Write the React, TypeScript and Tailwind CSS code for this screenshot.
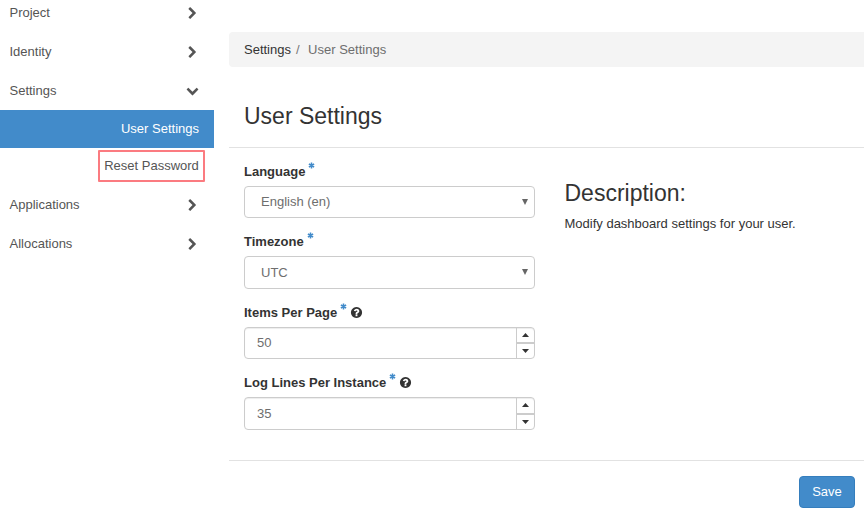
import type { ReactNode } from "react";

const CHEVRON_RIGHT =
  "M1363 877l-742 742q-19 19-45 19t-45-19l-166-166q-19-19-19-45t19-45l531-531-531-531q-19-19-19-45t19-45l166-166q19-19 45-19t45 19l742 742q19 19 19 45t-19 45z";
const CHEVRON_DOWN =
  "M1683 808l-742 741q-19 19-45 19t-45-19l-742-741q-19-19-19-45.5t19-45.5l166-165q19-19 45-19t45 19l531 531 531-531q19-19 45-19t45 19l166 165q19 19 19 45.5t-19 45.5z";
const QUESTION =
  "M1024 1376v-192q0-14-9-23t-23-9h-192q-14 0-23 9t-9 23v192q0 14 9 23t23 9h192q14 0 23-9t9-23zm256-672q0-88-55.5-163t-138.5-116-170-41q-243 0-371 213-15 24 8 42l132 100q7 6 19 6 16 0 25-12 53-68 86-92 34-24 86-24 48 0 85.5 26t37.5 59q0 38-20 61t-68 45q-63 28-115.5 86.5t-52.5 125.5v36q0 14 9 23t23 9h192q14 0 23-9t9-23q0-19 21.5-49.5t54.5-49.5q32-18 49-28.5t46-35 44.5-48 28-60.5 12.5-81zm384 192q0 209-103 385.5t-279.5 279.5-385.5 103-385.5-103-279.5-279.5-103-385.5 103-385.5 279.5-279.5 385.5-103 385.5 103 279.5 279.5 103 385.5z";

function Icon({ d, className }: { d: string; className: string }) {
  return (
    <svg viewBox="0 0 1792 1792" fill="currentColor" className={className}>
      <path d={d} />
    </svg>
  );
}

function NavItem({ label, open = false }: { label: string; open?: boolean }) {
  return (
    <div className="flex h-[39px] items-center justify-between pr-[15px] pl-[9.5px]">
      <span>{label}</span>
      {open ? <Icon d={CHEVRON_DOWN} className="size-[13px]" /> : <Icon d={CHEVRON_RIGHT} className="mt-[2px] size-[13px]" />}
    </div>
  );
}

function Field({ label, help = false, className, children }: { label: string; help?: boolean; className: string; children: ReactNode }) {
  return (
    <div className={className}>
      <div className="flex h-[19px] items-center font-bold">
        <span>{label}</span>
        <svg viewBox="0 0 7 7" className="mb-[12px] ml-[3px] size-[7px]" fill="none" stroke="#428bca" strokeWidth="1.5">
          <path d="M3.5 .5v6M.9 2l5.2 3M6.1 2L.9 5" />
        </svg>
        {help && <Icon d={QUESTION} className="ml-[3px] size-[13px]" />}
      </div>
      <div className="mt-[5px]">{children}</div>
    </div>
  );
}

function SelectBox({ value, className }: { value: string; className: string }) {
  return (
    <div className={`flex w-[291px] items-center justify-between rounded border border-[#ccc] pr-[6px] pl-4 text-[#6e6e6e] ${className}`}>
      <span className="-mt-px">{value}</span>
      <svg viewBox="0 0 6 6" className="mb-px size-[6px]" fill="#666">
        <path d="M0 0h6L3 6z" />
      </svg>
    </div>
  );
}

function Stepper({ value, className }: { value: string; className: string }) {
  return (
    <div className={`flex w-[291px] overflow-hidden rounded border border-[#ccc] text-[#6e6e6e] shadow-[inset_0_1px_1px_rgba(0,0,0,0.075)] ${className}`}>
      <span className="-mt-px flex flex-1 items-center pl-3">{value}</span>
      <div className="flex w-[18px] flex-col border-l border-[#ccc]">
        <div className="flex flex-1 items-center justify-center border-b border-[#ccc]">
          <svg viewBox="0 0 7 4" className="h-1 w-[7px]" fill="#333"><path d="M0 4h7L3.5 0z" /></svg>
        </div>
        <div className="flex flex-1 items-center justify-center border-t border-[#ccc]">
          <svg viewBox="0 0 7 4" className="h-1 w-[7px]" fill="#333"><path d="M0 0h7L3.5 4z" /></svg>
        </div>
      </div>
    </div>
  );
}

export default function App() {
  return (
    <div className="flex h-[515px] w-[864px] overflow-hidden bg-white font-['Liberation_Sans',Arial,sans-serif] text-[13px] leading-[19px] text-[#333]">
      <nav className="-mt-[7px] w-[214px] shrink-0 text-[#555]">
        <NavItem label="Project" />
        <NavItem label="Identity" />
        <NavItem label="Settings" open />
        <div className="flex h-[38px] items-center justify-end bg-[#428bca] pr-[15px] pb-[2px] text-white">User Settings</div>
        <div className="flex h-[37px] justify-end pt-[2px] pr-[9px]">
          <div className="flex h-[32px] w-[107px] items-center justify-center rounded-[1px] border-2 border-[#fb7b80] pb-[2px]">Reset Password</div>
        </div>
        <NavItem label="Applications" />
        <NavItem label="Allocations" />
      </nav>
      <main className="ml-[15px] flex-1 pt-8">
        <div className="flex h-[35px] items-center rounded-l bg-[#f4f4f4] pl-[15px]">
          <span>Settings</span>
          <span className="ml-[5px] text-[#777]">/</span>
          <span className="ml-[8.5px] text-[#6e6e6e]">User Settings</span>
        </div>
        <h1 className="flex h-[81px] items-center border-b border-[#e2e2e2] pt-[19px] pl-[15px] text-[23px]">User Settings</h1>
        <div className="flex h-[313px] border-b border-[#e2e2e2] pt-[14px] pl-[15px]">
          <div className="w-[291px]">
            <Field label="Language" className="h-[70px]"><SelectBox value="English (en)" className="h-8" /></Field>
            <Field label="Timezone" className="h-[71px]"><SelectBox value="UTC" className="h-[33px]" /></Field>
            <Field label="Items Per Page" help className="h-[70px]"><Stepper value="50" className="h-8" /></Field>
            <Field label="Log Lines Per Instance" help className="h-[70px]"><Stepper value="35" className="h-[33px]" /></Field>
          </div>
          <div className="ml-[29.5px] pt-[17px]">
            <h2 className="text-[23px] leading-[28px]">Description:</h2>
            <p className="mt-[7px]">Modify dashboard settings for your user.</p>
          </div>
        </div>
        <div className="flex justify-end pt-[15px] pr-[9px]">
          <button className="h-8 w-14 rounded border border-[#357ebd] bg-[#428bca] pb-[2px] text-white">Save</button>
        </div>
      </main>
    </div>
  );
}
